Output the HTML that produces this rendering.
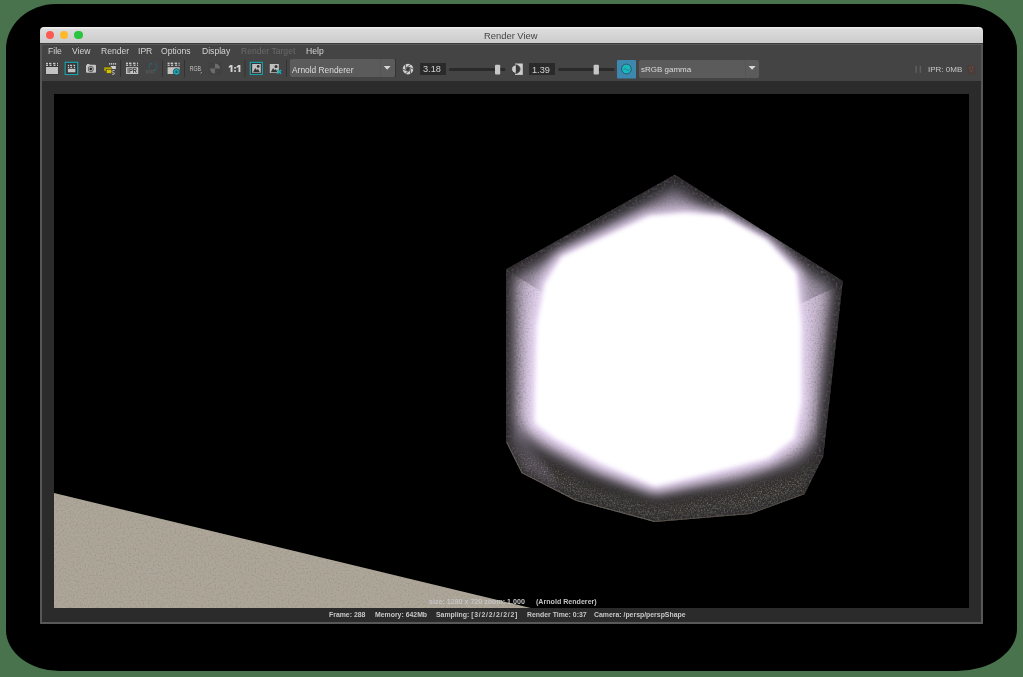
<!DOCTYPE html>
<html><head><meta charset="utf-8">
<style>
*{margin:0;padding:0;box-sizing:border-box}
html,body{width:1023px;height:677px;overflow:hidden;background:#48734d;font-family:"Liberation Sans",sans-serif;position:relative}
.a{position:absolute}
span,svg{will-change:transform}
#shadow{left:6px;top:4.3px;width:1011px;height:666.5px;background:#000;border-radius:50px 60px 60px 54px / 45px 46px 42px 41px}
#title{left:40px;top:27px;width:943px;height:16px;background:linear-gradient(#efefef 0,#ececec 1px,#dcdcdc 2px,#d6d6d6 7px,#cdcecd 14px,#cbcccb 16px);border-radius:4px 4px 0 0}
#tline{left:40px;top:43px;width:943px;height:1px;background:#3c3c3c}
#tline2{left:40px;top:44px;width:943px;height:1px;background:#575757}
#title span{position:absolute;left:444px;top:3px;font-size:9.4px;color:#444;white-space:nowrap}
.tl{position:absolute;top:3.7px;width:8.6px;height:8.6px;border-radius:50%}
#bar{left:40px;top:45px;width:943px;height:36px;background:#444}
.mi{position:absolute;top:45.9px;font-size:8.6px;color:#d4d4d4;white-space:nowrap;line-height:10px}
#dark{left:40px;top:81px;width:943px;height:542px;background:#2b2b2b}
#bl{left:40px;top:44px;width:2px;height:579px;background:#575757}
#br{left:981px;top:44px;width:2px;height:579px;background:#575757}
#bb{left:40px;top:621.5px;width:943px;height:2px;background:#585858}
#rv{left:54px;top:94px;width:915px;height:514px;background:#000;overflow:hidden}
.ov{position:absolute;top:596.6px;font-size:7.1px;font-weight:bold;color:#c4c4c4;white-space:nowrap;line-height:10px}
.st{position:absolute;top:610px;font-size:6.9px;font-weight:bold;color:#c8c8c8;white-space:nowrap;line-height:10px}
.dd{position:absolute;background:#5b5b5b;border-radius:2px}
.dd span{position:absolute;font-size:8.4px;color:#dcdcdc;white-space:nowrap;line-height:10px}
.fld{position:absolute;background:#2a2a2a}
.fld span{position:absolute;font-size:8.6px;color:#d2d2d2;white-space:nowrap;line-height:10px}
</style></head><body>
<div id="shadow" class="a"></div>
<div id="title" class="a">
  <div class="tl" style="left:5.7px;background:#fb5a52"></div>
  <div class="tl" style="left:19.9px;background:#fcb92c"></div>
  <div class="tl" style="left:34.4px;background:#2ac53f"></div>
  <span>Render View</span>
</div>
<div id="tline" class="a"></div>
<div id="tline2" class="a"></div>
<div id="bar" class="a"></div>
<div id="dark" class="a"></div>
<div id="bl" class="a"></div>
<div id="br" class="a"></div>
<div id="bb" class="a"></div>

<span class="mi" style="left:48px">File</span>
<span class="mi" style="left:72px">View</span>
<span class="mi" style="left:101px">Render</span>
<span class="mi" style="left:138px">IPR</span>
<span class="mi" style="left:161px">Options</span>
<span class="mi" style="left:202px">Display</span>
<span class="mi" style="left:241px;color:#6a6a6a">Render Target</span>
<span class="mi" style="left:306px">Help</span>

<!-- toolbar -->
<div class="dd" style="left:290px;top:59.3px;width:104.5px;height:17.5px">
  <div style="position:absolute;left:90px;top:0;width:1px;height:17.5px;background:#555"></div>
  <span style="left:2px;top:5.3px">Arnold Renderer</span>
</div>
<div class="dd" style="left:639px;top:60px;width:120px;height:17.7px">
  <div style="position:absolute;left:106px;top:0;width:1px;height:17.7px;background:#555"></div>
  <span style="left:1.8px;top:5.1px;font-size:8px">sRGB gamma</span>
</div>
<div class="fld" style="left:420px;top:63.2px;width:25.7px;height:11.6px"><span style="left:2.8px;top:1.3px;font-size:9.2px">3.18</span></div>
<div class="fld" style="left:529px;top:63.3px;width:26.3px;height:11.7px"><span style="left:3.4px;top:1.3px;font-size:9.2px">1.39</span></div>
<span style="position:absolute;left:927.8px;top:64.6px;font-size:8px;color:#c8c8c8;line-height:10px;white-space:nowrap">IPR: 0MB</span>

<svg class="a" style="left:0;top:0" width="1023" height="677" viewBox="0 0 1023 677">
  <defs>
    <g id="clap">
      <rect x="-0.5" y="-0.5" width="13" height="12" fill="#2e2e2e" opacity="0.6"/>
      <rect x="0" y="4" width="12" height="7" fill="#c2c2c2"/>
      <g fill="#c8c8c8">
        <rect x="0" y="-0.2" width="2" height="1.4"/><rect x="3" y="-0.2" width="2.5" height="1.4"/><rect x="7" y="-0.2" width="2.5" height="1.4"/><rect x="11" y="-0.2" width="1" height="1.4"/>
        <rect x="0" y="1.7" width="2" height="1.3"/><rect x="3.5" y="1.7" width="2" height="1.3"/><rect x="7.5" y="1.7" width="2" height="1.3"/><rect x="11" y="1.7" width="1" height="1.3"/>
      </g>
    </g>
  </defs>
  <!-- separators -->
  <g fill="#333">
    <rect x="120" y="60" width="1" height="17"/>
    <rect x="162" y="60" width="1" height="17"/>
    <rect x="184" y="60" width="1" height="17"/>
    <rect x="244.5" y="60" width="1" height="17"/>
    <rect x="286" y="60" width="1" height="17"/>
    <rect x="395" y="59" width="1" height="18"/>
  </g>
  <!-- icon1 -->
  <use href="#clap" x="46" y="63"/>
  <!-- icon2 -->
  <rect x="65.2" y="62.3" width="12.5" height="12.2" fill="#424242" stroke="#14a2ae" stroke-width="1.2"/><rect x="66.3" y="63.4" width="10.3" height="10" fill="none" stroke="#3b2c2c" stroke-width="0.7"/>
  <rect x="68" y="68.8" width="7.3" height="3.4" fill="#c4c4c4"/>
  <g fill="#c8c8c8"><rect x="68" y="64.8" width="1" height="1.2"/><rect x="70" y="64.8" width="2" height="1.2"/><rect x="73.5" y="64.8" width="1.5" height="1.2"/>
  <rect x="68" y="66.8" width="1" height="1.2"/><rect x="70.5" y="66.8" width="1.5" height="1.2"/><rect x="74" y="66.8" width="1" height="1.2"/></g>
  <!-- icon3 camera -->
  <rect x="86" y="64.8" width="10" height="8" rx="1" fill="#c4c4c4"/>
  <rect x="87" y="64" width="2.5" height="1.2" fill="#c4c4c4"/>
  <circle cx="90.8" cy="69" r="2.9" fill="#555"/>
  <circle cx="90.8" cy="69" r="2.2" fill="#aaa"/>
  <circle cx="90.8" cy="69" r="1.3" fill="#222"/>
  <!-- icon4 yellow folders -->
  <g fill="#bdbdbd"><rect x="109" y="63" width="1.3" height="1.7"/><rect x="111" y="63" width="1.3" height="1.7"/><rect x="113" y="63" width="1.3" height="1.7"/><rect x="115" y="63" width="1.1" height="1.7"/></g>
  <rect x="110.8" y="66" width="5" height="3" fill="#d0d0d0"/>
  <path d="M103.8 67 h7 l1 1 v3.2 h-8z" fill="#b3a300" stroke="#333" stroke-width="0.5"/>
  <rect x="106.3" y="69.6" width="5.2" height="3.8" fill="#d2c200" stroke="#333" stroke-width="0.5"/>
  <path d="M114.6 70.5 q-2.6 -0.5 -2.6 1.2 q0 0.8 1.4 0.9 q1.4 0.2 1.3 1.1 q-0.2 0.8 -2.7 0.6" stroke="#b8b8b8" stroke-width="1" fill="none"/>
  <!-- icon5 IPR clapper -->
  <g transform="translate(126,62.6)">
    <g fill="#c8c8c8">
      <rect x="0" y="0" width="2" height="1.4"/><rect x="3" y="0" width="2.5" height="1.4"/><rect x="7" y="0" width="2.5" height="1.4"/><rect x="11" y="0" width="1" height="1.4"/>
      <rect x="0" y="2" width="2" height="1.3"/><rect x="3.5" y="2" width="2" height="1.3"/><rect x="7.5" y="2" width="2" height="1.3"/><rect x="11" y="2" width="1" height="1.3"/>
    </g>
    <rect x="0" y="4.6" width="12.2" height="6.8" fill="#c4c4c4"/>
    <text x="6.1" y="10.6" font-size="6.4" font-weight="bold" fill="#3a3a3a" text-anchor="middle" font-family="Liberation Sans" textLength="9.6" lengthAdjust="spacingAndGlyphs">IPR</text>
  </g>
  <!-- icon6 refresh faded -->
  <path d="M151 63.6 A3.6 3.6 0 0 0 149.6 68.8" stroke="#286470" stroke-width="0.9" fill="none"/>
  <path d="M154.4 63.4 A3.6 3.6 0 0 1 155 70.2" stroke="#286470" stroke-width="0.9" fill="none"/>
  <rect x="150.2" y="62.8" width="1.6" height="1.6" fill="#2b6672"/>
  <rect x="154.2" y="69.3" width="1.6" height="1.6" fill="#2b6672"/>
  <text x="150" y="74" font-size="5.4" font-weight="bold" fill="#575757" text-anchor="middle" font-family="Liberation Sans">IPR</text>
  <!-- icon7 clapper gear -->
  <g transform="translate(167.6,62.6)">
    <g fill="#c8c8c8">
      <rect x="0" y="0" width="2" height="1.4"/><rect x="3" y="0" width="2.5" height="1.4"/><rect x="7" y="0" width="2.5" height="1.4"/><rect x="11" y="0" width="1" height="1.4"/>
      <rect x="0" y="2" width="2" height="1.3"/><rect x="3.5" y="2" width="2" height="1.3"/><rect x="7.5" y="2" width="2" height="1.3"/><rect x="11" y="2" width="1" height="1.3"/>
    </g>
    <rect x="0" y="4.6" width="12" height="6.8" fill="#c4c4c4"/>
  </g>
  <circle cx="176.5" cy="71.9" r="3.3" fill="#16a9b8" stroke="#2a2a2a" stroke-width="0.6"/>
  <circle cx="176.5" cy="71.9" r="1.2" fill="#2d5560"/>
  <!-- RGB -->
  <text x="189.7" y="70.9" font-size="6.6" fill="#c4c4c4" font-family="Liberation Sans" textLength="11.3" lengthAdjust="spacingAndGlyphs">RGB</text>
  <path d="M200.3 73.5 l1.5 -1.5" stroke="#bbb" stroke-width="0.8"/>
  <!-- quarter circle -->
  <rect x="208.4" y="62" width="13.2" height="12.8" fill="#414141"/>
  <circle cx="215" cy="68.6" r="5" fill="#434343"/>
  <path d="M215 68.6 V63.6 A5 5 0 0 1 220 68.6z" fill="#6c6c6c"/>
  <path d="M215 68.6 V73.6 A5 5 0 0 1 210 68.6z" fill="#6c6c6c"/>
  <!-- 1:1 -->
  <g fill="#d4d4d4"><path d="M230.6 64.9 h1.9 v7 h-1.9 v-4.9 l-1.8 0.9 v-1.7z"/><rect x="234.2" y="67" width="1.7" height="1.7"/><rect x="234.2" y="70.2" width="1.7" height="1.7"/><path d="M238.5 64.9 h1.9 v7 h-1.9 v-4.9 l-1.8 0.9 v-1.7z"/></g>
  <!-- teal pic -->
  <rect x="250.3" y="62.4" width="12" height="12" fill="#424242" stroke="#14a2ae" stroke-width="1.2"/><rect x="251.4" y="63.5" width="9.8" height="9.8" fill="none" stroke="#3b2c2c" stroke-width="0.7"/>
  <rect x="252.2" y="64" width="8.6" height="8.8" fill="#c0c0c0"/>
  <path d="M253 72.2 l2.3 -4.2 l1.6 2.2 l1 -1.4 l2 3.4z" fill="#333"/>
  <circle cx="258.2" cy="66.4" r="1.4" fill="#333"/>
  <!-- pic x -->
  <rect x="269.8" y="64" width="9" height="9" fill="#c0c0c0"/>
  <path d="M270.8 72.3 l2.3 -4.2 l1.6 2.2 l1 -1.4 l2 3.4z" fill="#333"/>
  <circle cx="276" cy="66.4" r="1.5" fill="#333"/>
  <path d="M277.3 70 l3.8 3.8 M281.1 70 l-3.8 3.8" stroke="#17b3bd" stroke-width="1.3"/>
  <!-- dropdown arrows -->
  <path d="M383.8 66 h6.8 l-3.4 3.7z" fill="#d8d8d8"/>
  <path d="M748.6 66 h7 l-3.5 3.7z" fill="#d8d8d8"/>
  <!-- aperture -->
  <circle cx="408" cy="69.1" r="5.3" fill="#cfcfcf"/>
  <path d="M408.54 67.07 L410.03 68.56 L409.48 70.58 L407.46 71.13 L405.97 69.64 L406.52 67.62Z" fill="#3c3c3c"/>
  <path d="M408.54 67.07 L413.40 69.10 M410.03 68.56 L410.70 73.78 M409.48 70.58 L405.30 73.78 M407.46 71.13 L402.60 69.10 M405.97 69.64 L405.30 64.42 M406.52 67.62 L410.70 64.42" stroke="#3c3c3c" stroke-width="0.8"/>
  <!-- sliders -->
  <rect x="448.8" y="67.9" width="56.7" height="3.1" rx="1.5" fill="#2a2a2a"/>
  <rect x="495" y="64.8" width="5.2" height="9.7" rx="1" fill="#c6c6c6"/>
  <rect x="558.2" y="67.9" width="56.5" height="3.1" rx="1.5" fill="#2a2a2a"/>
  <rect x="593.6" y="64.8" width="5.3" height="9.7" rx="1" fill="#c6c6c6"/>
  <!-- contrast -->
  <rect x="515" y="63.5" width="7.8" height="11.4" fill="#cdcdcd"/>
  <circle cx="515.8" cy="69.1" r="4.2" fill="#cdcdcd" stroke="#3a3a3a" stroke-width="0.9"/>
  <path d="M515.8 64.9 A4.2 4.2 0 0 1 515.8 73.3z" fill="#3a3a3a"/>
  <!-- teal button -->
  <rect x="617" y="60" width="19" height="18.5" rx="1" fill="#3d88ae"/>
  <circle cx="626.4" cy="69" r="4.9" fill="#17b8be" stroke="#2b4f5c" stroke-width="0.9"/>
  <path d="M623.5 69.5 q1.5 -2 3 0 t3 0" stroke="#2b6a78" stroke-width="0.7" fill="none"/>
  <!-- pause -->
  <rect x="915.3" y="65.8" width="1.5" height="7" fill="#5e5e5e"/>
  <rect x="919.6" y="65.8" width="1.5" height="7" fill="#5e5e5e"/>
  <!-- red icon -->
  <rect x="967" y="65.2" width="8.3" height="9.2" rx="1.2" fill="#4c3d3a"/>
  <g fill="#9a7a5a"><circle cx="970" cy="68" r="0.5"/><circle cx="972.5" cy="67" r="0.5"/><circle cx="971" cy="71" r="0.5"/><circle cx="973" cy="70" r="0.4"/></g>
</svg>

<div id="rv" class="a"></div>
<svg class="a" style="left:0;top:0" width="1023" height="677" viewBox="0 0 1023 677">
  <defs>
    <clipPath id="rvclip"><rect x="54" y="94" width="915" height="514"/></clipPath>
    <clipPath id="shellclip"><path d="M674.8 174.7 L842.8 281 L823.2 456.5 L804.4 494.2 L750.4 514 L654.7 522 L575.7 500.7 L521.6 473.1 L506.1 442 L506.2 269.3 Z"/></clipPath>
    <mask id="rimmask" maskUnits="userSpaceOnUse" x="480" y="380" width="400" height="170"><path d="M500 445 L500 480 L580 515 L654 530 L760 525 L815 500 L830 455 L796 476 L717 496 L655 508 L590 488 L540 462 Z" fill="#fff" filter="url(#blur6)"/></mask>
    <mask id="edgemask" maskUnits="userSpaceOnUse" x="480" y="150" width="400" height="400"><path d="M674.8 174.7 L842.8 281 L823.2 456.5 L804.4 494.2 L750.4 514 L654.7 522 L575.7 500.7 L521.6 473.1 L506.1 442 L506.2 269.3 Z" stroke="#fff" stroke-width="26" fill="none" filter="url(#blur4)"/></mask>
    <filter id="blur6" x="-30%" y="-30%" width="160%" height="160%"><feGaussianBlur stdDeviation="6"/></filter>
    <filter id="blur2" x="-30%" y="-30%" width="160%" height="160%"><feGaussianBlur stdDeviation="2"/></filter>
    <filter id="blur3" x="-30%" y="-30%" width="160%" height="160%"><feGaussianBlur stdDeviation="3"/></filter>
    <filter id="blur9" x="-40%" y="-40%" width="180%" height="180%"><feGaussianBlur stdDeviation="9"/></filter>
    <filter id="blur10" x="-40%" y="-40%" width="180%" height="180%"><feGaussianBlur stdDeviation="10"/></filter>
    <filter id="blur4" x="-30%" y="-30%" width="160%" height="160%"><feGaussianBlur stdDeviation="4"/></filter>
    <filter id="blur05" x="-10%" y="-10%" width="120%" height="120%"><feGaussianBlur stdDeviation="0.7"/></filter>
    <filter id="blur15" x="-50%" y="-50%" width="200%" height="200%"><feGaussianBlur stdDeviation="1.5"/></filter>
    <filter id="blur14" x="-40%" y="-40%" width="180%" height="180%"><feGaussianBlur stdDeviation="14"/></filter>
    <filter id="noise" x="0" y="0" width="100%" height="100%">
      <feTurbulence type="fractalNoise" baseFrequency="0.6" numOctaves="1" seed="3" result="n"/>
      <feColorMatrix in="n" type="matrix" values="0 0 0 0 0.1  0 0 0 0 0.1  0 0 0 0 0.1  0 0 0 2.2 -1.0" result="c"/>
      <feComposite in="c" in2="SourceGraphic" operator="in"/>
    </filter>
    <filter id="noise3" x="0" y="0" width="100%" height="100%">
      <feTurbulence type="fractalNoise" baseFrequency="0.42" numOctaves="2" seed="7" result="n"/>
      <feColorMatrix in="n" type="matrix" values="0 0 0 0 0.1  0 0 0 0 0.1  0 0 0 0 0.1  0 0 0 2.6 -1.2" result="c"/>
      <feComposite in="c" in2="SourceGraphic" operator="in"/>
    </filter>
    <filter id="noise2" x="0" y="0" width="100%" height="100%">
      <feTurbulence type="fractalNoise" baseFrequency="0.7" numOctaves="1" seed="11" result="n"/>
      <feColorMatrix in="n" type="matrix" values="0 0 0 0 0.85  0 0 0 0 0.8  0 0 0 0 0.95  0 0 0 2.4 -1.15" result="c"/>
      <feComposite in="c" in2="SourceGraphic" operator="in"/>
    </filter>
    <linearGradient id="rimg" x1="0" y1="0" x2="0" y2="1">
      <stop offset="0" stop-color="#2c2b2e"/>
      <stop offset="0.55" stop-color="#302e30"/>
      <stop offset="1" stop-color="#3a3629"/>
    </linearGradient>
  </defs>
  <g clip-path="url(#rvclip)">
    <path d="M54 492.9 L530.6 608 L54 608 Z" fill="#aea799"/>
    <clipPath id="planeclip"><path d="M54 492.9 L530.6 608 L54 608 Z"/></clipPath>
    <g clip-path="url(#planeclip)" opacity="0.25"><rect x="54" y="490" width="480" height="120" fill="#000" filter="url(#noise)"/></g>
    <g clip-path="url(#shellclip)">
      <rect x="500" y="170" width="350" height="360" fill="#2a2829"/>
      <path d="M674.8 188 L832 286 L818 432 L798 458 L740 478 L655 490 L590 468 L536 442 L514 426 L514 276 Z" fill="#cdbdd6" filter="url(#blur9)"/>
      <g filter="url(#blur4)">
        <path d="M500 448 L500 480 L580 515 L654 530 L760 525 L815 500 L830 452 L796 474 L717 494 L655 504 L590 484 L540 460 Z" fill="#34302a" opacity="0.92"/>
      </g>
      <path d="M506.2 269.3 L674.8 174.7 L842.8 281 L842.8 283.5 L798.5 304.8 L796 276 L768 246 L722 222 L650 222 L562 260 L547 290 L543 293 Z" fill="#1e1c20" opacity="0.24" filter="url(#blur05)"/>
      
      <path d="M506.1 442 L521.6 473.1 L560 493 L548 468 L530 445 L520 420 Z" fill="#8a7f96" opacity="0.35" filter="url(#blur3)"/>
      <g mask="url(#rimmask)"><rect x="480" y="400" width="400" height="150" fill="#000" filter="url(#noise2)" opacity="0.5"/></g>
      <rect x="480" y="150" width="400" height="400" fill="#000" filter="url(#noise)" opacity="0.4"/>
      <path d="M674.8 174.7 L842.8 281 L823.2 456.5 L804.4 494.2 L750.4 514 L654.7 522 L575.7 500.7 L521.6 473.1 L506.1 442 L506.2 269.3 Z" stroke="#2a282c" stroke-width="11" fill="none" opacity="0.6" filter="url(#blur3)"/>
      <path d="M674.8 174.7 L842.8 281 M674.8 174.7 L506.2 269.3" stroke="#2a282c" stroke-width="22" fill="none" opacity="0.25" filter="url(#blur4)"/>
      <path d="M842.8 281 L823.2 456.5" stroke="#2a282c" stroke-width="16" fill="none" opacity="0.35" filter="url(#blur4)"/>
      <g mask="url(#edgemask)"><rect x="480" y="150" width="400" height="400" fill="#000" filter="url(#noise3)" opacity="0.75"/></g>
      <path d="M686 209 L726 213 L771 238 L801 271 L806 325 L806 403 L799 441 L771 463 L710 479 L655 492 L597 469 L549 442 L529 427 L528.6 403 L531 325 L539 281 L558 253 L646 213 Z" fill="#ecdcf8" filter="url(#blur6)"/>
      <path d="M686 213 L722 216 L766 240 L796 273 L801 325 L801 402 L794 438 L768 458 L709 473 L655 486 L601 463 L553 437 L535 423 L535 402 L537 325 L545 284 L562 257 L650 216 Z" fill="#fff" filter="url(#blur2)"/>
      <path d="M654.7 522 L575.7 500.7 L521.6 473.1 L506.1 442" stroke="#7d7565" stroke-width="2" fill="none" opacity="0.6"/>
      <path d="M654.7 522 L750.4 514 L804.4 494.2" stroke="#6d6658" stroke-width="2" fill="none" opacity="0.5"/>
    </g>
  </g>
</svg>

<span class="ov" style="left:428.8px">size: 1280 x 720 zoom: 1.000</span>
<span class="ov" style="left:536.1px">(Arnold Renderer)</span>
<span class="st" style="left:329.4px">Frame: 288</span>
<span class="st" style="left:374.5px">Memory: 642Mb</span>
<span class="st" style="left:435.5px">Sampling: <span style="letter-spacing:0.75px">[3/2/2/2/2/2</span>]</span>
<span class="st" style="left:526.5px">Render Time: 0:37</span>
<span class="st" style="left:594.1px">Camera: /persp/perspShape</span>
</body></html>
